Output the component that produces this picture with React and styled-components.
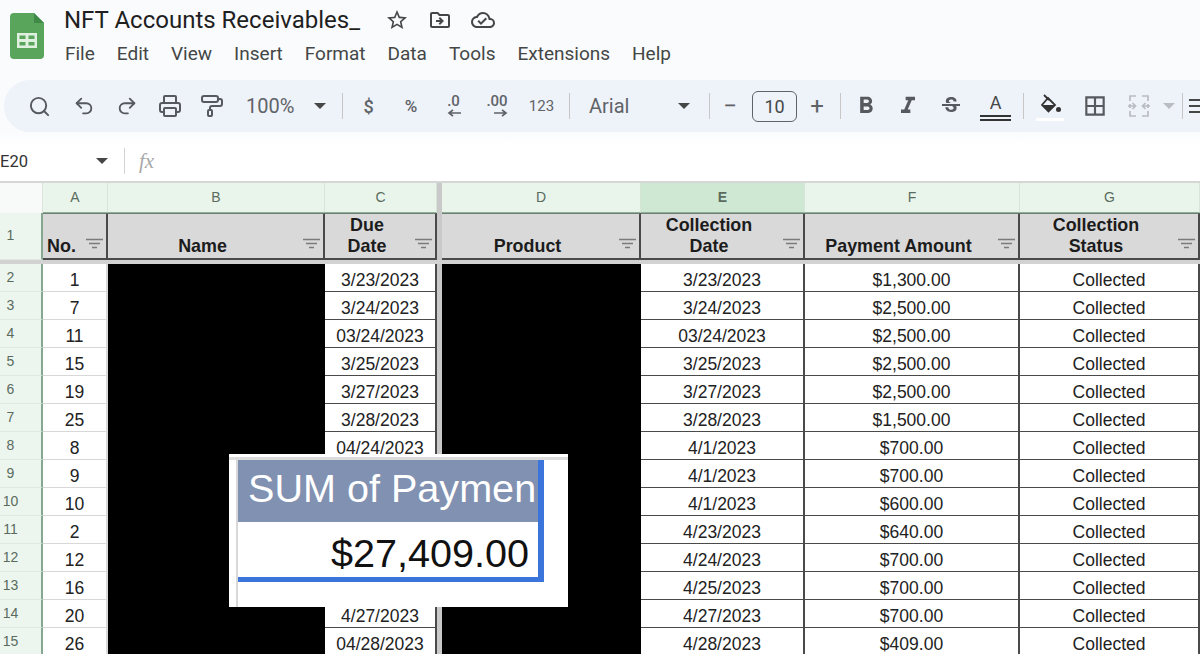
import React from "react";
import styled, { createGlobalStyle } from "styled-components";
import { Printer, PaintRoller, Redo2, Search, Undo2 } from "lucide-react";
import {
  MdOutlineBorderAll,
  MdOutlineCloudDone,
  MdOutlineDriveFileMove,
  MdFormatBold,
  MdFormatItalic,
  MdStarBorder,
  MdStrikethroughS,
} from "react-icons/md";

const GlobalStyle = createGlobalStyle`
  html, body {
    margin: 0;
    padding: 0;
    background: #fff;
  }
`;

const PageEl = styled.div`
  width: 1200px;
  height: 654px;
  overflow: hidden;
  position: relative;
  background: #fff;
  font-family: "Roboto", "Liberation Sans", sans-serif;
  color: #444746;
`;

const HeaderEl = styled.div`
  height: 143px;
  background: linear-gradient(#f9fbfd 0, #f9fbfd 132px, #fff 143px);
  box-sizing: border-box;
  padding-top: 4px;
`;

const TitleBarEl = styled.div`
  display: flex;
  height: 76px;
  padding-left: 10px;
`;

const LogoEl = styled.svg`
  width: 34px;
  height: 46px;
  margin-top: 9px;
  margin-right: 20px;
  flex: none;
`;

const TitleColEl = styled.div`
  display: flex;
  flex-direction: column;
`;

const TitleRowEl = styled.div`
  display: flex;
  align-items: center;
  height: 32px;
`;

const TitleEl = styled.div`
  font-size: 24px;
  color: #1f1f1f;
  width: 311px;
  white-space: nowrap;
`;

const TitleIconEl = styled.div`
  width: 43px;
  display: flex;
  justify-content: center;
  font-size: 24px;
  color: #444746;
`;

const MenuEl = styled.div`
  display: flex;
  gap: 22px;
  margin-top: 6px;
  font-size: 19px;
  color: #444746;
  padding-left: 1px;
`;

const ToolbarEl = styled.div`
  display: flex;
  align-items: center;
  height: 52px;
  margin-left: 4px;
  padding-left: 14px;
  background: #eef2f9;
  border-radius: 26px 0 0 26px;
  overflow: hidden;
  white-space: nowrap;
`;

const SlotEl = styled.div`
  flex: none;
  width: ${(p) => p.$w}px;
  display: flex;
  align-items: center;
  justify-content: center;
  font-size: ${(p) => p.$size || 24}px;
  color: ${(p) => p.$color || "#565a5e"};
`;

const SelectEl = styled.div`
  flex: none;
  width: ${(p) => p.$w}px;
  box-sizing: border-box;
  padding: 0 ${(p) => p.$right}px 0 ${(p) => p.$left}px;
  display: flex;
  align-items: center;
  justify-content: space-between;
  font-size: 20px;
  color: #5f6368;
`;

const CaretEl = styled.div`
  width: 0;
  height: 0;
  border-left: 6px solid transparent;
  border-right: 6px solid transparent;
  border-top: 6px solid ${(p) => p.$color || "#444746"};
`;

const SepEl = styled.div`
  flex: none;
  width: 10px;
  height: 26px;
  margin-left: ${(p) => p.$ml || 0}px;
  display: flex;
  justify-content: center;

  &::after {
    content: "";
    width: 1px;
    background: #c7c7c7;
  }
`;

const SmallTextEl = styled.span`
  font-size: ${(p) => p.$size || 18}px;
  font-weight: ${(p) => p.$weight || 500};
  color: #5f6368;
`;

const DecimalEl = styled.div`
  display: flex;
  flex-direction: column;
  align-items: center;
  line-height: 15px;
  font-size: 15px;
  font-weight: 500;
  color: #5f6368;
  margin-top: -2px;
`;

const SizeBoxEl = styled.div`
  width: 45px;
  height: 31px;
  box-sizing: border-box;
  border: 1px solid #5f6368;
  border-radius: 6px;
  display: flex;
  align-items: center;
  justify-content: center;
  font-size: 18px;
  color: #444746;
`;

const TextColorEl = styled.div`
  display: flex;
  flex-direction: column;
  align-items: center;
  width: 31px;
  font-size: 18px;
  line-height: 18px;
  color: #444746;
  margin-top: 3px;
`;

const DoubleLineEl = styled.div`
  width: 31px;
  height: 2px;
  margin-top: 3px;
  border-top: 2px solid #333;
  border-bottom: 2px solid #333;
`;

const FillEl = styled.div`
  display: flex;
  flex-direction: column;
  align-items: center;
  margin-top: 2px;
`;

const FillBarEl = styled.div`
  width: 28px;
  height: 3px;
  background: #fff;
  margin-top: 5px;
`;

const FormulaEl = styled.div`
  display: flex;
  align-items: center;
  height: 36px;
  margin-bottom: 2px;
  background: #fff;
`;

const CellNameEl = styled.div`
  width: 108px;
  box-sizing: border-box;
  display: flex;
  align-items: center;
  justify-content: space-between;
  font-size: 16.5px;
  color: #333;
`;

const FormulaSepEl = styled.div`
  width: 1px;
  height: 26px;
  background: #d3d3d3;
  margin: 0 14px 0 16px;
`;

const FxEl = styled.span`
  font-family: "Liberation Serif", serif;
  font-style: italic;
  font-size: 21px;
  color: #a8a8a8;
`;

const SheetEl = styled.div`
  border-top: 2px solid #d6d6d6;
  font-family: "Liberation Sans", Arial, sans-serif;
`;

const RowEl = styled.div`
  display: grid;
  grid-template-columns: 43px 65px 217px 112px 5px 199px 164px 215px 180px;
  height: ${(p) => p.$h}px;
`;

const CornerEl = styled.div`
  background: #f8f9f9;
  border-right: 1px solid #dbe3dc;
`;

const ColHeadEl = styled.div`
  display: flex;
  align-items: center;
  justify-content: center;
  box-sizing: border-box;
  padding-bottom: 2px;
  font-size: 14px;
  color: #5a6b5e;
  font-weight: ${(p) => (p.$on ? 700 : 400)};
  background: ${(p) => (p.$on ? "#cfe8d4" : "#e9f5eb")};
  border-right: 1px solid #d5e5d8;
  border-bottom: 1px solid #8fae97;
`;

const FreezeEl = styled.div`
  background: #c9c9c9;
`;

const RowHeadEl = styled.div`
  display: flex;
  align-items: flex-start;
  justify-content: center;
  box-sizing: border-box;
  padding: ${(p) => p.$top}px 20px 0 0;
  font-size: 14px;
  color: #5a6b5e;
  background: #ecf6ee;
  border-right: 2px solid #86a890;
  border-bottom: 1px solid #dfe9e1;
`;

const HeadCellEl = styled.div`
  position: relative;
  display: flex;
  align-items: flex-end;
  justify-content: center;
  box-sizing: border-box;
  padding: 0 26px 1px 0;
  background: #d9d9d9;
  border-top: 1px solid #6f7f74;
  border-right: 2px solid #4a4a4a;
  border-bottom: 2px solid #4a4a4a;
  font-size: 17.9px;
  font-weight: 700;
  line-height: 21px;
  text-align: center;
  color: #1c1c1c;
`;

const FilterEl = styled.svg`
  position: absolute;
  right: 3px;
  bottom: 8px;
  width: 17px;
  height: 12px;
`;

const RuleEl = styled.div`
  height: 4px;
  background: #d2d2d2;
`;

const CellEl = styled.div`
  display: flex;
  align-items: flex-end;
  justify-content: center;
  box-sizing: border-box;
  font-size: 17.5px;
  line-height: 22px;
  color: #222;
  background: #fff;
  border-bottom: 1px solid ${(p) => (p.$strong ? "#4a4a4a" : "#d8d8d8")};
  border-right: 2px solid ${(p) => (p.$strong ? "#4a4a4a" : "#d8d8d8")};
`;

const RedactedEl = styled.div`
  background: #000;
`;

const SumBoxEl = styled.div`
  position: absolute;
  left: 229px;
  top: 454px;
  width: 339px;
  height: 153px;
  box-sizing: border-box;
  padding: 6px 0 0 9px;
  background: #fff;
  font-family: "Liberation Sans", Arial, sans-serif;
  color: #111;

  &::before {
    content: "";
    position: absolute;
    left: 0;
    right: 0;
    top: 3px;
    height: 3px;
    background: #dcdcdc;
  }

  &::after {
    content: "";
    position: absolute;
    left: 7px;
    top: 3px;
    bottom: 0;
    width: 2px;
    background: #d8d8d8;
  }
`;

const SumFrameEl = styled.div`
  width: 306px;
  border-right: 6px solid #3b75dc;
  border-bottom: 5px solid #3b75dc;
  box-sizing: border-box;
`;

const SumTitleEl = styled.div`
  height: 62px;
  box-sizing: border-box;
  padding: 0 0 6px 10px;
  display: flex;
  align-items: center;
  background: #8191b1;
  color: #fff;
  font-size: 39.6px;
  white-space: nowrap;
  overflow: hidden;
`;

const SumValueEl = styled.div`
  height: 55px;
  box-sizing: border-box;
  padding: 7px 9px 0 0;
  display: flex;
  align-items: center;
  justify-content: flex-end;
  font-size: 39.6px;
`;

const menu = ["File", "Edit", "View", "Insert", "Format", "Data", "Tools", "Extensions", "Help"];

// the due dates of rows 9 to 13 sit behind the pasted SUM box, so they are left out
const rows = [
  [1, "3/23/2023", "3/23/2023", "$1,300.00"],
  [7, "3/24/2023", "3/24/2023", "$2,500.00"],
  [11, "03/24/2023", "03/24/2023", "$2,500.00"],
  [15, "3/25/2023", "3/25/2023", "$2,500.00"],
  [19, "3/27/2023", "3/27/2023", "$2,500.00"],
  [25, "3/28/2023", "3/28/2023", "$1,500.00"],
  [8, "04/24/2023", "4/1/2023", "$700.00"],
  [9, "", "4/1/2023", "$700.00"],
  [10, "", "4/1/2023", "$600.00"],
  [2, "", "4/23/2023", "$640.00"],
  [12, "", "4/24/2023", "$700.00"],
  [16, "", "4/25/2023", "$700.00"],
  [20, "4/27/2023", "4/27/2023", "$700.00"],
  [26, "04/28/2023", "4/28/2023", "$409.00"],
];

const Logo = () => (
  <LogoEl viewBox="0 0 34 46">
    <path d="M4 0h20l10 10v32a4 4 0 0 1-4 4H4a4 4 0 0 1-4-4V4a4 4 0 0 1 4-4z" fill="#5aa55c" />
    <path d="M24 0l10 10H24z" fill="#3f8a46" />
    <path d="M7 20h20v15H7z M9.500 22.500v3.500h6v-3.500z M18.500 22.500v3.500h6v-3.500z M9.500 29v3.500h6V29z M18.500 29v3.500h6V29z" fill="#dff0df" fillRule="evenodd" />
  </LogoEl>
);

const Filter = () => (
  <FilterEl viewBox="0 0 17 12">
    <path d="M0 1.500h17M3 5.500h11M6 9.500h5" stroke="#7b7b7b" strokeWidth="1.500" fill="none" />
  </FilterEl>
);

const Arrow = ({ flip }) => (
  <svg width="14" height="8" viewBox="0 0 14 8" style={{ alignSelf: "flex-end", transform: flip ? "scaleX(-1)" : "none" }}>
    <path d="M14 4H3M6 .8L2 4l4 3.200" stroke="#5f6368" strokeWidth="1.700" fill="none" />
  </svg>
);

const MergeIcon = () => (
  <svg width="26" height="26" viewBox="0 0 26 26" fill="none" stroke="#b9bdc2" strokeWidth="1.700">
    <path d="M10 3H4v5M4 11v4M4 18v5h6M16 3h6v5M22 11v4M22 18v5h-6M2 13h7M6.500 10l3 3-3 3M24 13h-7M19.500 10l-3 3 3 3" />
  </svg>
);

const FillIcon = () => (
  <svg width="24" height="19" viewBox="0 0 24 19">
    <path d="M6 1l5 5M10 4l7 7-6.500 6.500L4 11z" fill="none" stroke="#333" strokeWidth="1.800" />
    <path d="M4 11h13l-6.500 6.500z" fill="#333" />
    <circle cx="20.500" cy="15.500" r="2.500" fill="#333" />
  </svg>
);

const AlignIcon = () => (
  <svg width="20" height="20" viewBox="0 0 20 20" fill="#444746">
    <path d="M2 3h16v2H2zM2 9h16v2H2zM2 15h16v2H2z" />
  </svg>
);

const Toolbar = () => (
  <ToolbarEl>
    <SlotEl $w={42}><Search size={23} strokeWidth={2} /></SlotEl>
    <SlotEl $w={48}><Undo2 size={22} strokeWidth={2} /></SlotEl>
    <SlotEl $w={38}><Redo2 size={22} strokeWidth={2} /></SlotEl>
    <SlotEl $w={48}><Printer size={24} strokeWidth={2} /></SlotEl>
    <SlotEl $w={36}><PaintRoller size={24} strokeWidth={2} /></SlotEl>
    <SelectEl $w={107} $left={16} $right={11}>100%<CaretEl /></SelectEl>
    <SepEl />
    <SlotEl $w={43}><SmallTextEl>$</SmallTextEl></SlotEl>
    <SlotEl $w={42}><SmallTextEl $size={17}>%</SmallTextEl></SlotEl>
    <SlotEl $w={43}>
      <DecimalEl>.0<Arrow /></DecimalEl>
    </SlotEl>
    <SlotEl $w={44}>
      <DecimalEl>.00<Arrow flip /></DecimalEl>
    </SlotEl>
    <SlotEl $w={45}><SmallTextEl $size={15} $weight={400}>123</SmallTextEl></SlotEl>
    <SepEl />
    <SelectEl $w={130} $left={15} $right={14}>Arial<CaretEl /></SelectEl>
    <SepEl />
    <SlotEl $w={32}><SmallTextEl $size={24} $weight={400}>−</SmallTextEl></SlotEl>
    <SlotEl $w={57}><SizeBoxEl>10</SizeBoxEl></SlotEl>
    <SlotEl $w={28}><SmallTextEl $size={24} $weight={400}>+</SmallTextEl></SlotEl>
    <SepEl $ml={4} />
    <SlotEl $w={42} $size={28}><MdFormatBold /></SlotEl>
    <SlotEl $w={42} $size={28}><MdFormatItalic /></SlotEl>
    <SlotEl $w={44}><MdStrikethroughS /></SlotEl>
    <SlotEl $w={45}>
      <TextColorEl>A<DoubleLineEl /></TextColorEl>
    </SlotEl>
    <SepEl />
    <SlotEl $w={44}>
      <FillEl><FillIcon /><FillBarEl /></FillEl>
    </SlotEl>
    <SlotEl $w={46} $size={26}><MdOutlineBorderAll /></SlotEl>
    <SlotEl $w={42}><MergeIcon /></SlotEl>
    <SlotEl $w={17}><CaretEl $color="#b9bdc2" /></SlotEl>
    <SepEl />
    <SlotEl $w={20}><AlignIcon /></SlotEl>
  </ToolbarEl>
);

const Head = ({ children }) => (
  <HeadCellEl>
    <span>{children}</span>
    <Filter />
  </HeadCellEl>
);

export default function App() {
  return (
    <PageEl>
      <GlobalStyle />
      <HeaderEl>
        <TitleBarEl>
          <Logo />
          <TitleColEl>
            <TitleRowEl>
              <TitleEl>NFT Accounts Receivables_</TitleEl>
              <TitleIconEl><MdStarBorder /></TitleIconEl>
              <TitleIconEl><MdOutlineDriveFileMove /></TitleIconEl>
              <TitleIconEl><MdOutlineCloudDone /></TitleIconEl>
            </TitleRowEl>
            <MenuEl>
              {menu.map((item) => (
                <span key={item}>{item}</span>
              ))}
            </MenuEl>
          </TitleColEl>
        </TitleBarEl>
        <Toolbar />
      </HeaderEl>

      <FormulaEl>
        <CellNameEl>
          E20
          <CaretEl />
        </CellNameEl>
        <FormulaSepEl />
        <FxEl>fx</FxEl>
      </FormulaEl>

      <SheetEl>
        <RowEl $h={30}>
          <CornerEl />
          <ColHeadEl>A</ColHeadEl>
          <ColHeadEl>B</ColHeadEl>
          <ColHeadEl>C</ColHeadEl>
          <FreezeEl />
          <ColHeadEl>D</ColHeadEl>
          <ColHeadEl $on>E</ColHeadEl>
          <ColHeadEl>F</ColHeadEl>
          <ColHeadEl>G</ColHeadEl>
        </RowEl>
        <RowEl $h={47}>
          <RowHeadEl $top={14}>1</RowHeadEl>
          <Head>No.</Head>
          <Head>Name</Head>
          <Head>Due<br />Date</Head>
          <FreezeEl />
          <Head>Product</Head>
          <Head>Collection<br />Date</Head>
          <Head>Payment Amount</Head>
          <Head>Collection<br />Status</Head>
        </RowEl>
        <RuleEl />
        {rows.map(([no, due, collected, amount], i) => (
          <RowEl $h={28} key={no}>
            <RowHeadEl $top={5}>{i + 2}</RowHeadEl>
            <CellEl>{no}</CellEl>
            <RedactedEl />
            <CellEl $strong>{due}</CellEl>
            <FreezeEl />
            <RedactedEl />
            <CellEl $strong>{collected}</CellEl>
            <CellEl $strong>{amount}</CellEl>
            <CellEl $strong>Collected</CellEl>
          </RowEl>
        ))}
      </SheetEl>

      <SumBoxEl>
        <SumFrameEl>
          <SumTitleEl>SUM of Paymen</SumTitleEl>
          <SumValueEl>$27,409.00</SumValueEl>
        </SumFrameEl>
      </SumBoxEl>
    </PageEl>
  );
}
